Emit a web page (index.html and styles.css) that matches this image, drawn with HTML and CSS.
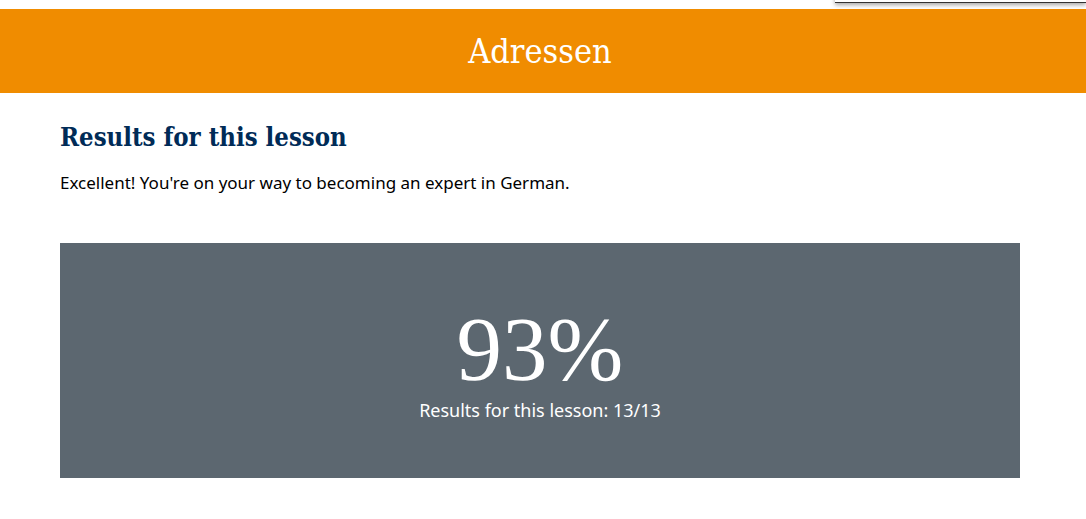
FILE: index.html
```html
<!DOCTYPE html>
<html lang="de">
<head>
<meta charset="utf-8">
<title>Adressen</title>
<link rel="stylesheet" href="styles.css">
</head>
<body>
<div class="overlay-edge"></div>
<header class="banner"><h1 class="banner-title">Adressen</h1></header>
<main class="content">
  <h2 class="results-title">Results for this lesson</h2>
  <p class="results-text">Excellent! You're on your way to becoming an expert in German.</p>
  <section class="score-box">
    <div class="score-value">93%</div>
    <div class="score-detail">Results for this lesson: 13/13</div>
  </section>
</main>
</body>
</html>
```
FILE: styles.css
```css
html, body {
  margin: 0;
  padding: 0;
  background: #ffffff;
}
body {
  padding-top: 9px;
  font-family: "Noto Sans", "Open Sans", sans-serif;
  position: relative;
}
.overlay-edge {
  position: absolute;
  top: -10px;
  left: 835px;
  right: 0;
  height: 12px;
  background: #ffffff;
  border-bottom: 1px solid #333;
  box-shadow: 0 2px 4px rgba(0,0,0,0.35);
}
.banner {
  background: #f08c00;
  height: 84px;
  box-sizing: border-box;
  padding-right: 6px;
  display: flex;
  align-items: center;
  justify-content: center;
}
.banner-title {
  margin: 0;
  color: #ffffff;
  font-family: "DejaVu Serif", "Liberation Serif", serif;
  font-stretch: condensed;
  font-weight: normal;
  font-size: 34px;
}
.content {
  padding: 28px 66px 0 60px;
}
.results-title {
  margin: 0;
  color: #002b57;
  font-family: "DejaVu Serif", "Liberation Serif", serif;
  font-stretch: condensed;
  font-weight: bold;
  font-size: 25.5px;
  line-height: 32px;
}
.results-text {
  margin: 18px 0 0;
  font-size: 17px;
  line-height: 24px;
  color: #000;
}
.score-box {
  margin-top: 48px;
  box-sizing: border-box;
  padding-top: 10px;
  background: #5c6770;
  height: 235px;
  display: flex;
  flex-direction: column;
  align-items: center;
  justify-content: center;
  color: #ffffff;
}
.score-value {
  font-family: "Liberation Serif", "DejaVu Serif", serif;
  font-size: 91px;
  line-height: 80px;
  margin-top: -2px;
}
.score-detail {
  font-size: 18px;
  line-height: 20px;
  margin-top: 10px;
}
```
